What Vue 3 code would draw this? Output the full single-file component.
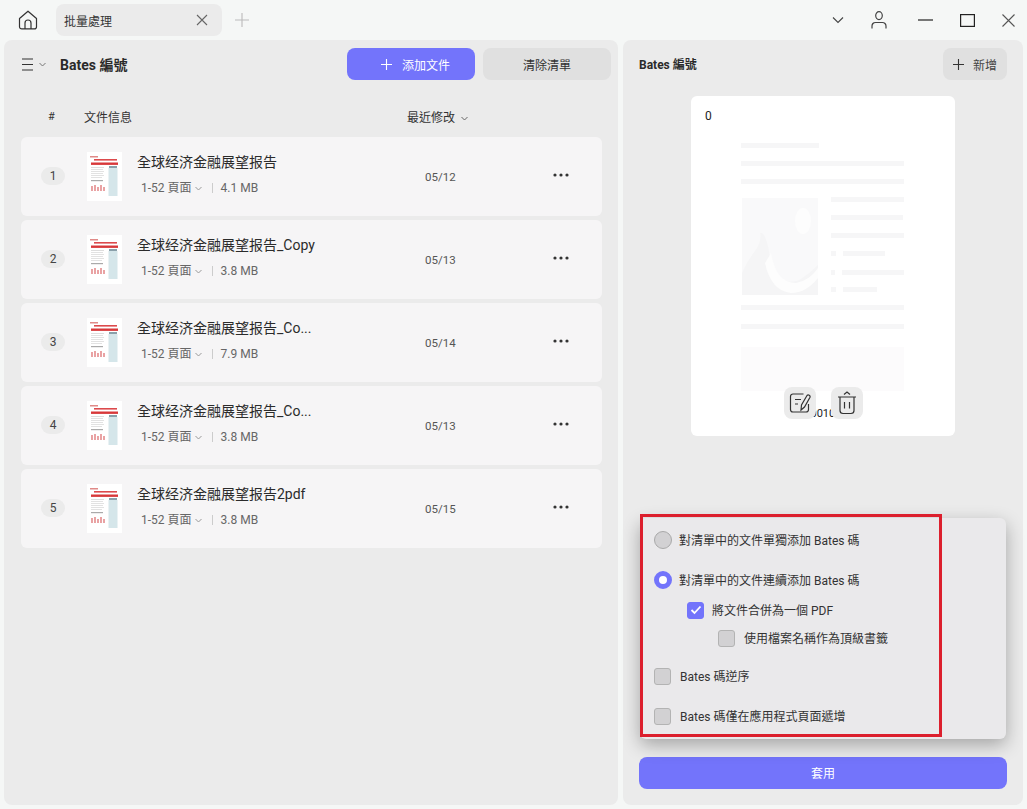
<template>
  <div class="app">
    <header class="topbar">
      <svg class="home" width="22" height="22" viewBox="0 0 22 22" fill="none" stroke="#333" stroke-width="1.2">
        <path d="M2.500 9.500 11 2.200l8.500 7.300v8.200a2.200 2.200 0 0 1-2.200 2.200H4.700a2.200 2.200 0 0 1-2.200-2.200z" stroke-linejoin="round" />
        <path d="M8 20v-6a3 3 0 0 1 6 0v6" />
      </svg>
      <div class="tab">
        <span>批量處理</span>
        <svg width="12" height="12" viewBox="0 0 12 12" stroke="#666" stroke-width="1.100"><path d="M1 1l10 10M11 1 1 11" /></svg>
      </div>
      <svg class="tab-add" width="14" height="14" viewBox="0 0 14 14" stroke="#bbb" stroke-width="1.100"><path d="M7 0v14M0 7h14" /></svg>
      <div class="win-controls">
        <svg width="12" height="8" viewBox="0 0 12 8" fill="none" stroke="#444" stroke-width="1.100"><path d="M1 1.500 6 6.500l5-5" /></svg>
        <svg class="user" width="16" height="18" viewBox="0 0 16 18" fill="none" stroke="#444" stroke-width="1.200">
          <ellipse cx="8" cy="4.600" rx="3.300" ry="4" />
          <path d="M1 17.500v-2.500a3.500 3.500 0 0 1 3.500-3.500h7a3.500 3.500 0 0 1 3.500 3.500v2.500" />
        </svg>
        <svg class="min" width="15" height="2" viewBox="0 0 15 2" stroke="#222" stroke-width="1.200"><path d="M0 1h15" /></svg>
        <svg class="max" width="15" height="13" viewBox="0 0 15 13" fill="none" stroke="#222" stroke-width="1.200"><rect x=".6" y=".6" width="13.800" height="11.800" /></svg>
        <svg class="close" width="13" height="13" viewBox="0 0 13 13" stroke="#555" stroke-width="1.100"><path d="M.5.500l12 12M12.500.500l-12 12" /></svg>
      </div>
    </header>

    <main class="body">
      <section class="left">
        <div class="left-head">
          <svg width="13" height="13" viewBox="0 0 13 13" stroke="#333" stroke-width="1.200"><path d="M1 1h11M1 6.500h11M1 12h11" /></svg>
          <svg class="tiny" width="7" height="5" viewBox="0 0 7 5" fill="none" stroke="#777"><path d="M.5 1l3 3 3-3" /></svg>
          <h1>Bates 編號</h1>
          <button class="btn-add">
            <svg width="11" height="11" viewBox="0 0 11 11" stroke="#fff" stroke-width="1.100"><path d="M5.500 0v11M0 5.500h11" /></svg>
            <span>添加文件</span>
          </button>
          <button class="btn-clear">清除清單</button>
        </div>

        <div class="cols">
          <span class="col-num">#</span>
          <span class="col-info">文件信息</span>
          <span class="col-date">最近修改
            <svg width="7" height="5" viewBox="0 0 7 5" fill="none" stroke="#666"><path d="M.5 1l3 3 3-3" /></svg>
          </span>
        </div>

        <ul class="files">
          <li v-for="(f, i) in files" :key="i" class="file">
            <span class="idx">{{ i + 1 }}</span>
            <svg class="thumb" width="35" height="49" viewBox="0 0 35 49">
              <rect width="35" height="49" fill="#fff" />
              <rect x="3" y="4" width="8" height="1.500" fill="#e08a88" />
              <rect x="7" y="7" width="23" height="1.600" fill="#dc4a4c" />
              <rect x="4" y="10.500" width="27" height="2.400" fill="#d8383a" />
              <rect x="4" y="15" width="13" height="1" fill="#ddd" />
              <rect x="4" y="17" width="12" height="1" fill="#e2e2e2" />
              <rect x="4" y="19" width="13" height="1" fill="#e2e2e2" />
              <rect x="4" y="21" width="12" height="1" fill="#e2e2e2" />
              <rect x="4" y="23" width="13" height="1" fill="#e2e2e2" />
              <rect x="4" y="25" width="11" height="1" fill="#e2e2e2" />
              <rect x="4" y="28" width="12" height="1.200" fill="#aaa" />
              <rect x="22" y="14" width="8" height="2" fill="#8aa0aa" />
              <rect x="21.500" y="16" width="9" height="28" fill="#d5e6ea" />
              <path d="M5 39v-5M8 39v-6M11 39v-4M14 39v-6M17 39v-4" stroke="#d8585a" stroke-width="1.100" />
            </svg>
            <div class="meta">
              <div class="name">{{ f.name }}</div>
              <div class="sub">
                <span>1-52 頁面</span>
                <svg width="7" height="5" viewBox="0 0 7 5" fill="none" stroke="#999"><path d="M.5 1l3 3 3-3" /></svg>
                <i class="sep"></i>
                <span>{{ f.size }}</span>
              </div>
            </div>
            <span class="date">{{ f.date }}</span>
            <svg class="more" width="16" height="4" viewBox="0 0 16 4" fill="#333"><circle cx="2" cy="2" r="1.600" /><circle cx="8" cy="2" r="1.600" /><circle cx="14" cy="2" r="1.600" /></svg>
          </li>
        </ul>
      </section>

      <section class="right">
        <div class="right-head">
          <h2>Bates 編號</h2>
          <button class="btn-new">
            <svg width="11" height="11" viewBox="0 0 11 11" stroke="#333" stroke-width="1.100"><path d="M5.500 0v11M0 5.500h11" /></svg>
            <span>新增</span>
          </button>
        </div>

        <div class="preview">
          <span class="p-top">0</span>
          <svg class="skeleton" width="164" height="248" viewBox="0 0 164 248" fill="#f6f6f7">
            <rect x="0" y="0" width="78" height="5" />
            <rect x="0" y="18" width="163" height="5" />
            <rect x="0" y="36" width="163" height="5" />
            <rect x="1" y="55" width="76" height="97" fill="#f9f9fa" />
            <path d="M1 152v-22q5-12 13-22 7-10 5-18 5-2 9 18 2 17 11 27 11 7 21 1 9-6 17-14v30z" fill="#f5f5f6" />
            <path d="M30 110q5 30 25 30 13-2 22-15v10q-12 15-27 15-20-2-26-30z" fill="#fdfdfd" />
            <ellipse cx="62" cy="78" rx="8" ry="13" fill="#fdfdfd" />
            <rect x="90" y="54" width="73" height="5" />
            <rect x="90" y="72" width="72" height="5" />
            <rect x="90" y="90" width="73" height="5" />
            <rect x="90" y="108" width="5" height="5" />
            <rect x="102" y="108" width="42" height="5" />
            <rect x="90" y="127" width="4" height="5" />
            <rect x="101" y="127" width="62" height="5" />
            <rect x="90" y="144" width="5" height="5" />
            <rect x="102" y="144" width="34" height="5" />
            <rect x="0" y="162" width="163" height="5" />
            <rect x="0" y="181" width="163" height="5" />
            <rect x="0" y="204" width="163" height="44" fill="#fcfbfc" />
          </svg>
          <span class="p-bottom">0010</span>
          <div class="p-actions">
            <button class="p-btn">
              <svg width="22" height="22" viewBox="0 0 22 22" fill="none" stroke="#333" stroke-width="1.200">
                <path d="M14.500 2H4a2.500 2.500 0 0 0-2.500 2.500v13A2.500 2.500 0 0 0 4 20h13a2.500 2.500 0 0 0 2.500-2.500V12" />
                <path d="M6 7.500h6M6 12h3" />
                <path d="M12 18l.5-5L18 3.500a1.800 1.800 0 0 1 3 1.800L15.500 15z" />
              </svg>
            </button>
            <button class="p-btn">
              <svg width="20" height="24" viewBox="0 0 20 24" fill="none" stroke="#333" stroke-width="1.200">
                <path d="M7 3.500 10 1l3 2.500M1 6h18" />
                <path d="M3 6v13.500A3 3 0 0 0 6 22.500h8a3 3 0 0 0 3-3V6" />
                <path d="M7.500 11v6.500M12.500 11v6.500" />
              </svg>
            </button>
          </div>
        </div>

        <div class="spacer"></div>

        <div class="options">
          <div class="opt first"><i class="radio"></i>對清單中的文件單獨添加 Bates 碼</div>
          <div class="opt second"><i class="radio on"></i>對清單中的文件連續添加 Bates 碼</div>
          <div class="opt sub1">
            <i class="check on">
              <svg width="12" height="10" viewBox="0 0 12 10" fill="none" stroke="#fff" stroke-width="1.800"><path d="M1.500 5l3 3 6-6.500" /></svg>
            </i>將文件合併為一個 PDF
          </div>
          <div class="opt sub2"><i class="check"></i>使用檔案名稱作為頂級書籤</div>
          <div class="opt third"><i class="check"></i>Bates 碼逆序</div>
          <div class="opt fourth"><i class="check"></i>Bates 碼僅在應用程式頁面遞增</div>
          <div class="mark"></div>
        </div>

        <button class="apply">套用</button>
      </section>
    </main>
  </div>
</template>

<script setup>
const files = [
  { name: '全球经济金融展望报告', size: '4.1 MB', date: '05/12' },
  { name: '全球经济金融展望报告_Copy', size: '3.8 MB', date: '05/13' },
  { name: '全球经济金融展望报告_Co...', size: '7.9 MB', date: '05/14' },
  { name: '全球经济金融展望报告_Co...', size: '3.8 MB', date: '05/13' },
  { name: '全球经济金融展望报告2pdf', size: '3.8 MB', date: '05/15' },
]
</script>

<style>
html,
body {
  margin: 0;
  background: #f5f7f6;
}
</style>

<style scoped>
.app {
  width: 1027px;
  height: 809px;
  box-sizing: border-box;
  padding: 0 4px 4px;
  display: flex;
  flex-direction: column;
  overflow: hidden;
  background: #f5f7f6;
  font-family: Roboto, "Noto Sans CJK TC", sans-serif;
  color: #333;
}
button {
  font-family: inherit;
  border: none;
  padding: 0;
}
h1,
h2,
ul {
  margin: 0;
  padding: 0;
  list-style: none;
}
.topbar {
  height: 40px;
  flex: none;
  display: flex;
  align-items: center;
}
.home {
  margin-left: 13px;
}
.tab {
  width: 166px;
  height: 32px;
  margin: 0 0 0 17px;
  box-sizing: border-box;
  padding: 0 8px;
  background: #ebebeb;
  border-radius: 8px;
  display: flex;
  align-items: center;
  justify-content: space-between;
  font-size: 12px;
  color: #333;
}
.tab svg {
  margin-right: 6px;
}
.tab-add {
  margin-left: 13px;
}
.win-controls {
  margin-left: auto;
  display: flex;
  align-items: center;
  padding-right: 8px;
}
.win-controls > svg:first-child {
  margin-right: 1px;
}
.user {
  margin-left: 26px;
}
.min {
  margin-left: 31px;
}
.max {
  margin-left: 27px;
}
.close {
  margin-left: 27px;
}
.body {
  flex: 1;
  display: flex;
  gap: 5px;
  min-height: 0;
}
.left {
  width: 614px;
  background: #ebebeb;
  border-radius: 8px;
  padding: 0 16px 0 17px;
  box-sizing: border-box;
}
.left-head {
  height: 32px;
  display: flex;
  align-items: center;
  margin-top: 8px;
}
.left-head .tiny {
  margin-left: 5px;
}
h1 {
  font-size: 14px;
  font-weight: 700;
  margin-left: 14px;
  color: #2a2a2a;
}
.btn-add {
  margin-left: auto;
  width: 128px;
  height: 32px;
  background: #7374fb;
  color: #fff;
  border-radius: 8px;
  font-size: 12px;
  display: flex;
  align-items: center;
  justify-content: center;
  gap: 10px;
  padding-left: 9px;
  box-sizing: border-box;
}
.btn-clear {
  margin: 0 -9px 0 8px;
  width: 128px;
  height: 32px;
  background: #e0e0e0;
  border-radius: 8px;
  font-size: 12px;
  color: #333;
}
.cols {
  height: 32px;
  margin-top: 20px;
  display: flex;
  align-items: center;
  font-size: 12px;
  color: #333;
}
.col-num {
  margin-left: 27px;
  width: 36px;
  font-size: 11px;
}
.col-info {
  width: 323px;
}
.col-date svg {
  margin-left: 3px;
  vertical-align: 1px;
}
.files {
  margin-top: 5px;
  display: flex;
  flex-direction: column;
  gap: 4px;
}
.file {
  height: 79px;
  background: #f6f5f6;
  border-radius: 6px;
  display: flex;
  align-items: center;
  position: relative;
}
.idx {
  margin: -1px 0 0 20px;
  width: 24px;
  height: 18px;
  border-radius: 9px;
  background: #ebebeb;
  font-size: 12px;
  color: #444;
  text-align: center;
  line-height: 18px;
}
.thumb {
  margin-left: 22px;
  filter: blur(0.35px);
}
.meta {
  margin-left: 15px;
  width: 288px;
}
.name {
  font-size: 14px;
  color: #2b2b2b;
  line-height: 18px;
  margin-top: -4px;
}
.sub {
  margin: 9px 0 0 4px;
  display: flex;
  align-items: center;
  font-size: 12px;
  color: #666;
  line-height: 16px;
}
.sub svg {
  margin-left: 3px;
}
.sep {
  width: 1px;
  height: 10px;
  background: #ccc;
  margin: 0 8px 0 10px;
}
.date {
  font-size: 11.500px;
  color: #555;
  width: 128px;
}
.more {
  margin-top: -3px;
}
.right {
  width: 400px;
  background: #ebebeb;
  border-radius: 8px;
  padding: 0 16px;
  box-sizing: border-box;
  display: flex;
  flex-direction: column;
  position: relative;
}
.right-head {
  height: 32px;
  margin: 8px 0 16px;
  flex: none;
  display: flex;
  align-items: center;
  justify-content: space-between;
}
h2 {
  font-size: 12px;
  font-weight: 700;
  color: #2a2a2a;
  margin-bottom: 2px;
}
.btn-new {
  width: 64px;
  height: 32px;
  background: #e0e0e0;
  border-radius: 8px;
  font-size: 12px;
  color: #444;
  display: flex;
  align-items: center;
  justify-content: center;
  gap: 9px;
}
.preview {
  align-self: center;
  flex: none;
  width: 264px;
  height: 340px;
  background: #fff;
  border-radius: 6px;
  position: relative;
  display: flex;
  justify-content: center;
}
.skeleton {
  margin-top: 47px;
  filter: blur(0.5px);
}
.p-top {
  position: absolute;
  left: 14px;
  top: 13px;
  font-size: 12px;
  color: #222;
}
.p-bottom {
  position: absolute;
  left: 119.500px;
  top: 311px;
  font-size: 11px;
  color: #222;
}
.p-actions {
  position: absolute;
  left: 93px;
  top: 291px;
  display: flex;
  gap: 15px;
}
.p-btn {
  width: 32px;
  height: 32px;
  background: #ebebeb;
  border-radius: 8px;
  display: flex;
  align-items: center;
  justify-content: center;
}
.spacer {
  flex: 1;
}
.options {
  position: absolute;
  left: 17px;
  top: 478px;
  width: 366px;
  height: 221px;
  background: #eae9eb;
  border-radius: 6px;
  box-shadow: 0 6px 18px rgba(0, 0, 0, 0.3);
  font-size: 12px;
  color: #333;
}
.opt {
  position: absolute;
  display: flex;
  align-items: center;
  height: 18px;
  white-space: nowrap;
}
.first {
  left: 14px;
  top: 12px;
}
.second {
  left: 14px;
  top: 52px;
}
.sub1 {
  left: 47px;
  top: 82px;
}
.sub2 {
  left: 78px;
  top: 110px;
}
.third {
  left: 14px;
  top: 148px;
}
.fourth {
  left: 14px;
  top: 188px;
}
.radio {
  width: 16px;
  height: 16px;
  border-radius: 50%;
  background: #d2d1d3;
  border: 1px solid #a9a9a9;
  margin: 2px 7px 0 0;
}
.radio.on {
  width: 8px;
  height: 8px;
  background: #fff;
  border: 5px solid #7374fb;
}
.check {
  width: 15px;
  height: 15px;
  border-radius: 3px;
  background: #d2d1d3;
  border: 1px solid #b3b3b3;
  margin: 2px 9px 0 0;
  display: flex;
  align-items: center;
  justify-content: center;
}
.check.on {
  background: #7374fb;
  border-color: #7374fb;
  margin-right: 8px;
}
.mark {
  position: absolute;
  left: 0;
  top: -4px;
  width: 296px;
  height: 217px;
  border: 3px solid #dc1f2d;
}
.apply {
  flex: none;
  height: 32px;
  background: #7374fb;
  color: #fff;
  border-radius: 8px;
  font-size: 12px;
  padding-bottom: 2px;
  margin: 0 0 16px;
}
</style>
